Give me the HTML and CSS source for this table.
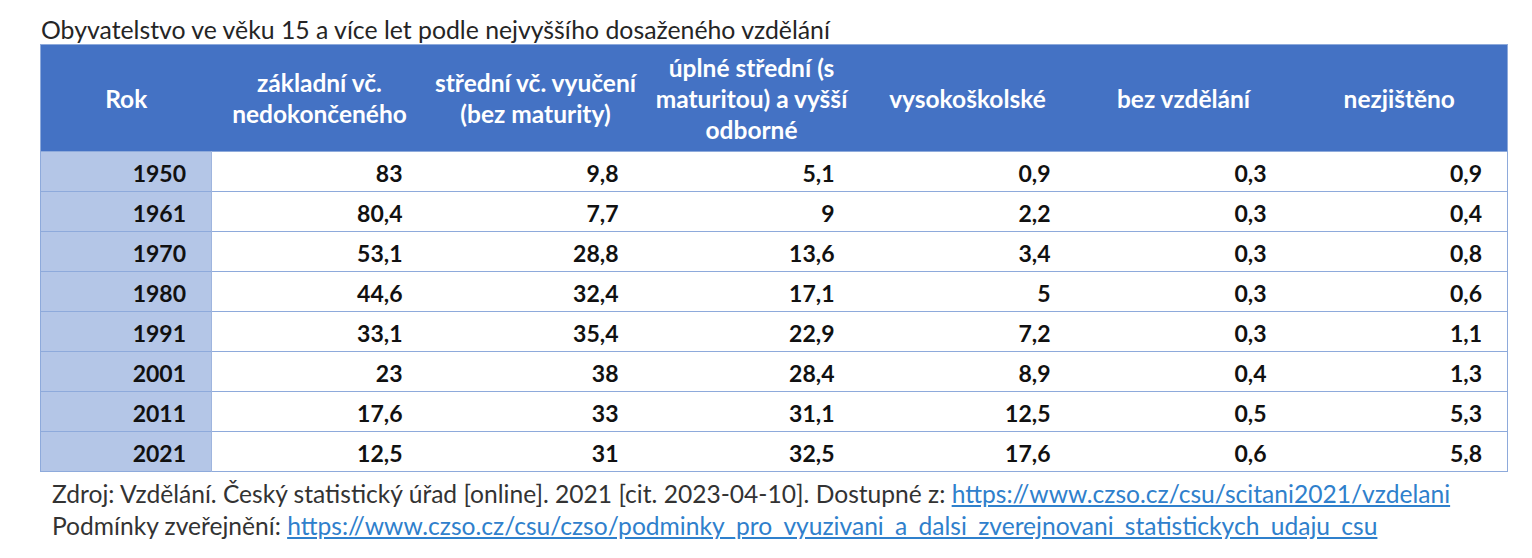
FILE: index.html
```html
<!DOCTYPE html>
<html lang="cs">
<head>
<meta charset="utf-8">
<title>Obyvatelstvo podle vzdělání</title>
<link rel="stylesheet" href="styles.css">
</head>
<body>
<div class="page">
  <div class="title">Obyvatelstvo ve věku 15 a více let podle nejvyššího dosaženého vzdělání</div>
  <table class="data">
    <colgroup>
      <col class="c-year">
      <col class="c-val"><col class="c-val"><col class="c-val"><col class="c-val"><col class="c-val"><col class="c-val">
    </colgroup>
    <thead>
      <tr>
        <th>Rok</th>
        <th>základní vč.<br>nedokončeného</th>
        <th>střední vč. vyučení<br>(bez maturity)</th>
        <th>úplné střední (s<br>maturitou) a vyšší<br>odborné</th>
        <th>vysokoškolské</th>
        <th>bez vzdělání</th>
        <th>nezjištěno</th>
      </tr>
    </thead>
    <tbody>
      <tr><td class="year">1950</td><td>83</td><td>9,8</td><td>5,1</td><td>0,9</td><td>0,3</td><td>0,9</td></tr>
      <tr><td class="year">1961</td><td>80,4</td><td>7,7</td><td>9</td><td>2,2</td><td>0,3</td><td>0,4</td></tr>
      <tr><td class="year">1970</td><td>53,1</td><td>28,8</td><td>13,6</td><td>3,4</td><td>0,3</td><td>0,8</td></tr>
      <tr><td class="year">1980</td><td>44,6</td><td>32,4</td><td>17,1</td><td>5</td><td>0,3</td><td>0,6</td></tr>
      <tr><td class="year">1991</td><td>33,1</td><td>35,4</td><td>22,9</td><td>7,2</td><td>0,3</td><td>1,1</td></tr>
      <tr><td class="year">2001</td><td>23</td><td>38</td><td>28,4</td><td>8,9</td><td>0,4</td><td>1,3</td></tr>
      <tr><td class="year">2011</td><td>17,6</td><td>33</td><td>31,1</td><td>12,5</td><td>0,5</td><td>5,3</td></tr>
      <tr><td class="year">2021</td><td>12,5</td><td>31</td><td>32,5</td><td>17,6</td><td>0,6</td><td>5,8</td></tr>
    </tbody>
  </table>
  <div class="source">
    <p>Zdroj: Vzdělání. Český statistický úřad [online]. 2021 [cit. 2023-04-10]. Dostupné z: <a href="#">https://www.czso.cz/csu/scitani2021/vzdelani</a></p>
    <p>Podmínky zveřejnění: <a href="#">https://www.czso.cz/csu/czso/podminky_pro_vyuzivani_a_dalsi_zverejnovani_statistickych_udaju_csu</a></p>
  </div>
</div>
</body>
</html>
```
FILE: styles.css
```css
html, body {
  margin: 0;
  padding: 0;
  background: #ffffff;
}
body {
  font-family: Lato, "Open Sans", "DejaVu Sans", sans-serif;
}
.page {
  padding: 16px 0 0 40px;
}
.title {
  font-size: 24.8px;
  line-height: 28px;
  color: #252525;
  padding-left: 1px;
}
.data {
  border-collapse: collapse;
  table-layout: fixed;
  width: 1467px;
  border: 1px solid #8eaadb;
}
.c-year { width: 171px; }
.c-val { width: 216px; }
.data th {
  background: #4472c4;
  color: #ffffff;
  font-weight: 700;
  font-size: 24.5px;
  line-height: 31px;
  height: 106px;
  padding: 0;
  text-align: center;
  vertical-align: middle;
}
.data td {
  height: 37px;
  border-top: 1px solid #8eaadb;
  padding: 2px 25px 0 0;
  text-align: right;
  vertical-align: middle;
  font-weight: 700;
  font-size: 23px;
  color: #111111;
}
.data td.year {
  background: #b4c6e7;
  border-right: 1px solid #9fb5de;
}
.source {
  padding: 6px 0 0 12px;
  font-size: 24.6px;
  line-height: 32px;
  color: #333333;
}
.source p {
  margin: 0;
}
.source a {
  color: #2f80cc;
  text-decoration: underline;
}
```
